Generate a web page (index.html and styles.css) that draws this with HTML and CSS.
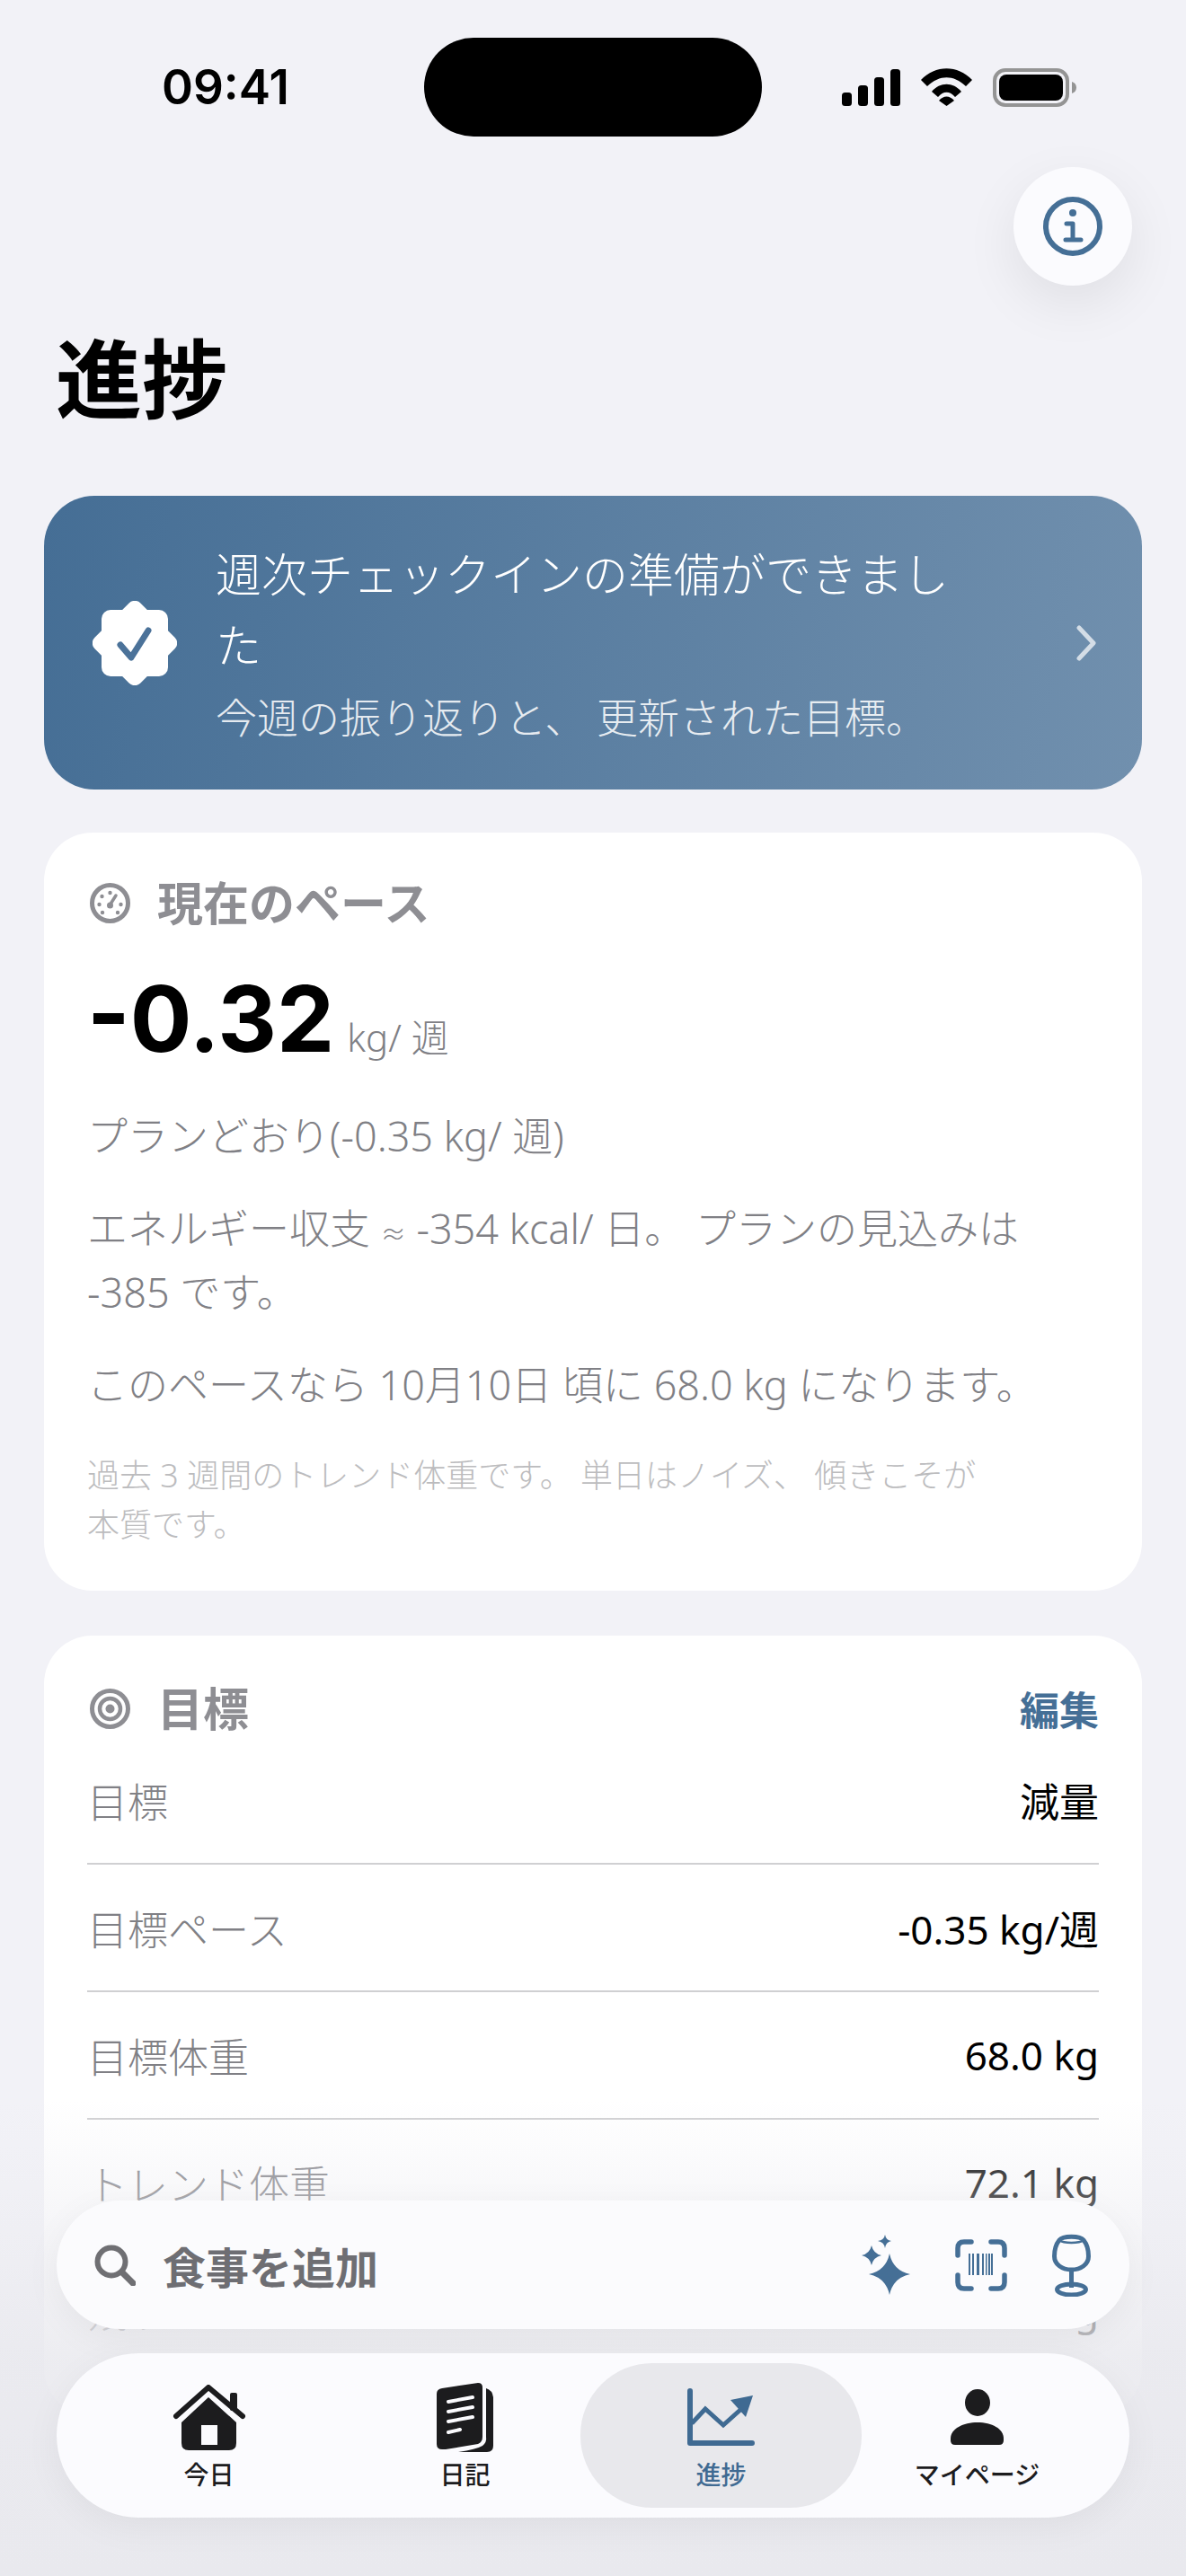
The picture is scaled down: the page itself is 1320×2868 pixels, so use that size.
FILE: index.html
```html
<!DOCTYPE html>
<html lang="ja">
<head>
    <meta charset="UTF-8">
    <meta name="viewport" content="width=device-width, initial-scale=1.0">
    <title>進捗</title>
    <link rel="stylesheet" href="styles.css">
</head>
<body>
    <div class="screen">
        <div class="status-bar">
            <div class="status-time">09:41</div>
            <div class="island"></div>
            <div class="status-icons">
                <svg width="65" height="41" viewBox="0 0 65 41"><rect x="0" y="26" width="11" height="15" rx="3.5"/><rect x="18" y="18" width="11" height="23" rx="3.5"/><rect x="36" y="9" width="11" height="32" rx="3.5"/><rect x="54" y="0" width="11" height="41" rx="3.5"/></svg>
                <svg width="57" height="42" viewBox="0 0 57 42"><path d="M0 13C16-4 41-4 57 13L50 20C36 7 21 7 7 20Z"/><path d="M12 26C21 15 36 15 45 26L38 32C32 25 25 25 19 32Z"/><path d="M20 36C25 30 32 30 37 36L28.5 42Z"/></svg>
                <svg width="93" height="43" viewBox="0 0 93 43"><rect x="2" y="2" width="81" height="39" rx="12" fill="none" stroke="#949494" stroke-width="4"/><rect x="7" y="7" width="71" height="29" rx="8"/><path d="M88 15C91 16 93 18 93 21.500C93 25 91 27 88 28Z" fill="#949494"/></svg>
            </div>
        </div>

        <div class="info-row">
            <button class="info-btn">
                <svg width="66" height="66" viewBox="0 0 66 66" fill="none" stroke="#456f96"><circle cx="33" cy="33" r="30" stroke-width="6"/><circle cx="33" cy="18" r="4" fill="#456f96" stroke="none"/><path d="M26 30H33V48M25 48H42" stroke-width="5" stroke-linecap="round" stroke-linejoin="round"/></svg>
            </button>
        </div>

        <h1 class="page-title">進捗</h1>

        <div class="content">
            <div class="checkin-banner">
                <svg class="seal" width="94" height="94" viewBox="0 0 94 94"><rect x="10" y="10" width="74" height="74" rx="10" fill="#fff"/><rect x="11" y="11" width="72" height="72" rx="9" fill="#fff" transform="rotate(45 47 47)"/><path d="M31 49L43 63L62 33" fill="none" stroke="#4b7299" stroke-width="7" stroke-linecap="round" stroke-linejoin="round"/></svg>
                <div class="checkin-text">
                    <div class="checkin-title">週次チェックインの準備ができました</div>
                    <div class="checkin-sub">今週の振り返りと、 更新された目標。</div>
                </div>
                <svg class="chevron" width="24" height="40" viewBox="0 0 24 40"><path d="M4 3L20 20L4 37" fill="none" stroke="#fff" stroke-opacity="0.7" stroke-width="5" stroke-linecap="round" stroke-linejoin="round"/></svg>
            </div>

            <div class="card pace-card">
                <div class="card-header">
                    <div class="card-heading">
                        <svg width="45" height="45" viewBox="0 0 45 45" fill="none" stroke="#8e8e93"><circle cx="22.500" cy="22.500" r="20" stroke-width="5"/><path d="M22 25L29 14" stroke-width="3.500" stroke-linecap="round"/><g fill="#8e8e93" stroke="none"><circle cx="22.500" cy="11" r="2.200"/><circle cx="13.500" cy="15" r="2.200"/><circle cx="10.500" cy="24" r="2.200"/><circle cx="34.500" cy="24" r="2.200"/><circle cx="22.500" cy="25" r="3.500"/><circle cx="14" cy="33" r="2.200"/><circle cx="31" cy="33" r="2.200"/></g></svg>
                        <span>現在のペース</span>
                    </div>
                </div>
                <div class="pace-stat"><span class="pace-value">-0.32</span> <span class="pace-unit">kg/ 週</span></div>
                <p class="pace-text pace-plan">プランどおり(-0.35 kg/ 週)</p>
                <p class="pace-text">エネルギー収支 <span class="approx">≈</span> -354 kcal/ 日。 プランの見込みは -385 です。</p>
                <p class="pace-text">このペースなら 10月10日 頃に 68.0 kg になります。</p>
                <p class="pace-note">過去 3 週間のトレンド体重です。 単日はノイズ、 傾きこそが本質です。</p>
            </div>

            <div class="card goal-card">
                <div class="card-header">
                    <div class="card-heading">
                        <svg width="45" height="45" viewBox="0 0 45 45" fill="none" stroke="#8e8e93"><circle cx="22.500" cy="22.500" r="20" stroke-width="5"/><circle cx="22.500" cy="22.500" r="11.500" stroke-width="4.500"/><circle cx="22.500" cy="22.500" r="5" fill="#8e8e93" stroke="none"/></svg>
                        <span>目標</span>
                    </div>
                    <a class="edit-link">編集</a>
                </div>
                <div class="goal-row"><span>目標</span><span class="goal-value">減量</span></div>
                <div class="goal-row"><span>目標ペース</span><span class="goal-value">-0.35 kg/週</span></div>
                <div class="goal-row"><span>目標体重</span><span class="goal-value">68.0 kg</span></div>
                <div class="goal-row"><span>トレンド体重</span><span class="goal-value">72.1 kg</span></div>
                <div class="goal-row"><span>残り</span><span class="goal-value">4.1 kg</span></div>
            </div>
        </div>

        <div class="bottom-fade"></div>

        <div class="bottom-dock">
            <div class="search-bar">
                <svg width="46" height="46" viewBox="0 0 46 46" fill="none" stroke="#6f6f73" stroke-linecap="round"><circle cx="19" cy="19" r="15.500" stroke-width="6"/><path d="M31 31L43 43" stroke-width="7"/></svg>
                <span class="search-label">食事を追加</span>
                <div class="search-actions">
                    <svg width="54" height="67" viewBox="0 0 54 67" fill="#456f96"><path d="M31 21Q35 40 54 44Q35 48 31 67Q27 48 8 44Q27 40 31 21Z"/><path d="M11 12Q13 21 22 23Q13 25 11 34Q9 25 0 23Q9 21 11 12Z"/><path d="M26 0Q27 6 33 7Q27 8 26 15Q25 8 18 7Q25 6 26 0Z"/></svg>
                    <svg width="58" height="58" viewBox="0 0 58 58" fill="none" stroke="#456f96"><path d="M3 18V10Q3 3 10 3H18M40 3H48Q55 3 55 10V18M3 40V48Q3 55 10 55H18M40 55H48Q55 55 55 48V40" stroke-width="5.500" stroke-linecap="round"/><g fill="#456f96" stroke="none"><rect x="15" y="16" width="2" height="24"/><rect x="19" y="16" width="2" height="24"/><rect x="24" y="16" width="3" height="24"/><rect x="30" y="16" width="2" height="24"/><rect x="34" y="16" width="1.500" height="24"/><rect x="37" y="16" width="2" height="24"/><rect x="40" y="16" width="2" height="24"/></g></svg>
                    <svg width="43" height="70" viewBox="0 0 43 70" fill="none" stroke="#456f96" stroke-width="5"><path d="M8 7C4 12 2.500 19 2.500 25C2.500 34 11 40 21.500 40C32 40 40.500 34 40.500 25C40.500 19 39 12 35 7C31 2 12 2 8 7Z"/><path d="M8 7C13 11 30 11 35 7" stroke-width="2.500"/><path d="M21.500 40V60"/><ellipse cx="21.500" cy="62" rx="16" ry="6"/></svg>
                </div>
            </div>

            <div class="tab-bar">
                <div class="tab">
                    <div class="tab-icon">
                        <svg width="82" height="73" viewBox="0 0 82 73"><path d="M40 14L71 42V65Q71 73 63 73H18Q10 73 10 65V42ZM32 45V67H50V45Z" fill="#1c1c1e" fill-rule="evenodd"/><path d="M4 35L40 3L78 35" fill="none" stroke="#1c1c1e" stroke-width="6" stroke-linecap="round" stroke-linejoin="round"/><rect x="64" y="9" width="8" height="20" rx="2" fill="#1c1c1e"/></svg>
                    </div>
                    <span class="tab-label">今日</span>
                </div>
                <div class="tab">
                    <div class="tab-icon">
                        <svg width="63" height="77" viewBox="0 0 63 77"><path d="M0 12Q0 7 6 6L46 0Q51 0 51 5V60Q51 66 46 68L10 74H6Q0 74 0 68Z" fill="#1c1c1e"/><path d="M55 6Q62 8 63 16V70Q63 77 56 77H24Q44 74 51 70Q56 66 55 60Z" fill="#1c1c1e"/><path d="M13 21L40 16M13 32L40 27M13 43L40 38M13 55L26 52" fill="none" stroke="#fbfbfe" stroke-width="4" stroke-linecap="round"/></svg>
                    </div>
                    <span class="tab-label">日記</span>
                </div>
                <div class="tab tab-active">
                    <div class="tab-icon">
                        <svg width="75" height="64" viewBox="0 0 75 64"><path d="M3 3V61H72" fill="none" stroke="#3f6a92" stroke-width="6" stroke-linecap="round" stroke-linejoin="round"/><path d="M5 39L20 23L40 41L59 24" fill="none" stroke="#3f6a92" stroke-width="5"/><path d="M73 8L48 13L65 32Z" fill="#3f6a92"/></svg>
                    </div>
                    <span class="tab-label">進捗</span>
                </div>
                <div class="tab">
                    <div class="tab-icon">
                        <svg width="59" height="62" viewBox="0 0 59 62" fill="#1c1c1e"><ellipse cx="30" cy="15" rx="14" ry="15"/><path d="M0 55C0 44 14 37 30 37C46 37 59 44 59 55V57Q59 62 54 62H5Q0 62 0 57Z"/></svg>
                    </div>
                    <span class="tab-label">マイページ</span>
                </div>
            </div>
        </div>
    </div>
</body>
</html>
```

FILE: styles.css
```css
* {
    box-sizing: border-box;
}

body {
    margin: 0;
    font-family: "Noto Sans", "Noto Sans CJK JP", sans-serif;
    background-color: #f2f2f7;
    color: #000;
}

.screen {
    position: relative;
    width: 1320px;
    height: 2868px;
    overflow: hidden;
    background-color: #f2f2f7;
}

.status-bar {
    display: flex;
    align-items: center;
    height: 152px;
    padding-top: 42px;
    padding-left: 180px;
}

.status-time {
    width: 292px;
    font-family: Inter, sans-serif;
    font-size: 53px;
    font-weight: 600;
}

.island {
    width: 376px;
    height: 110px;
    border-radius: 55px;
    background-color: #000;
}

.status-icons {
    display: flex;
    align-items: center;
    gap: 23px;
    margin-left: 89px;
}

.info-row {
    display: flex;
    justify-content: flex-end;
    margin-top: 34px;
    padding-right: 60px;
}

.info-btn {
    display: flex;
    align-items: center;
    justify-content: center;
    width: 132px;
    height: 132px;
    padding: 0;
    border: none;
    border-radius: 50%;
    background-color: #fbfbfe;
    box-shadow: 0 20px 60px rgba(0, 0, 0, 0.08);
}

.page-title {
    margin: 53px 0 0;
    padding-left: 62px;
    font-size: 96px;
    font-weight: 700;
    line-height: 100px;
}

.content {
    padding: 81px 49px 0;
}

.checkin-banner {
    display: flex;
    align-items: center;
    height: 327px;
    padding: 0 50px 0 54px;
    border-radius: 56px;
    background: linear-gradient(100deg, #456e95, #7190ae);
    color: #fff;
}

.seal {
    flex-shrink: 0;
}

.checkin-text {
    width: 840px;
    margin-left: 43px;
}

.checkin-title {
    font-size: 51px;
    line-height: 79px;
    font-weight: 300;
}

.checkin-sub {
    margin-top: 7px;
    font-size: 46px;
    line-height: 66px;
    font-weight: 300;
    opacity: 0.85;
}

.chevron {
    margin-left: auto;
}

.card {
    padding: 49px 48px 46px;
    border-radius: 54px;
    background-color: #fff;
}

.pace-card {
    margin-top: 48px;
}

.goal-card {
    margin-top: 50px;
    padding-top: 49px;
}

.card-header {
    display: flex;
    align-items: center;
    justify-content: space-between;
}

.card-heading {
    display: flex;
    align-items: center;
    gap: 30px;
    padding-left: 3px;
    font-size: 51px;
    font-weight: 700;
    line-height: 58px;
    color: #8e8e93;
}

.edit-link {
    font-size: 44px;
    font-weight: 700;
    color: #456f96;
}

.pace-stat {
    display: flex;
    align-items: baseline;
    gap: 14px;
    margin-top: 40px;
    line-height: 120px;
}

.pace-value {
    font-family: Inter, sans-serif;
    font-size: 102px;
    font-weight: 700;
}

.pace-unit {
    font-size: 42px;
    font-weight: 300;
    color: #808085;
}

.pace-text {
    margin: 32px 0 0;
    font-size: 45px;
    font-weight: 300;
    line-height: 71px;
    color: #808085;
}

.pace-plan {
    margin-top: 14px;
}

.approx {
    font-size: 28px;
    line-height: 1;
}

.pace-note {
    max-width: 1020px;
    margin: 38px 0 0;
    font-size: 36px;
    font-weight: 300;
    line-height: 55px;
    color: #bcbcbe;
}

.goal-row {
    display: flex;
    align-items: center;
    justify-content: space-between;
    height: 142px;
    border-bottom: 2px solid #d0d0d2;
    font-size: 45px;
    font-weight: 300;
    color: #808085;
}

.goal-row:first-of-type {
    height: 128px;
}

.goal-value {
    font-size: 44px;
    font-weight: 400;
    color: #000;
}

.bottom-fade {
    position: absolute;
    left: 0;
    right: 0;
    bottom: 0;
    height: 530px;
    background: linear-gradient(to bottom, rgba(236, 236, 241, 0), rgba(236, 236, 241, 0.55) 30%, rgba(233, 233, 238, 0.85) 55%, #e9e9ee);
}

.bottom-dock {
    position: absolute;
    left: 63px;
    right: 63px;
    bottom: 65px;
    display: flex;
    flex-direction: column;
    gap: 27px;
}

.search-bar {
    display: flex;
    align-items: center;
    gap: 30px;
    height: 143px;
    padding: 0 43px 0 42px;
    border-radius: 72px;
    background-color: #fbfbfd;
    box-shadow: 0 10px 40px rgba(0, 0, 0, 0.05);
}

.search-label {
    font-size: 48px;
    font-weight: 700;
    color: #6e6e73;
}

.search-actions {
    display: flex;
    align-items: center;
    gap: 50px;
    margin-left: auto;
}

.tab-bar {
    display: grid;
    grid-template-columns: repeat(4, 285px);
    height: 183px;
    padding: 11px 27px;
    border-radius: 92px;
    background-color: #fbfbfe;
    box-shadow: 0 10px 40px rgba(0, 0, 0, 0.05);
}

.tab {
    display: flex;
    flex-direction: column;
    align-items: center;
    padding-top: 21px;
    border-radius: 80px;
    color: #1c1c1e;
}

.tab-active {
    margin: 0 -14px;
    background-color: #e8e8ec;
    color: #3f6a92;
}

.tab-icon {
    display: flex;
    align-items: center;
    justify-content: center;
    height: 78px;
}

.tab-label {
    margin-top: 8px;
    font-size: 28px;
    font-weight: 500;
    line-height: 34px;
}
```
